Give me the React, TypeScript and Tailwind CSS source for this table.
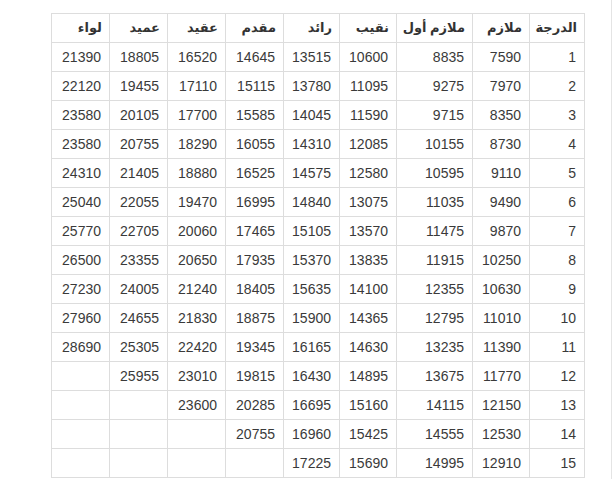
import React from "react";

const headers = [
  "الدرجة",
  "ملازم",
  "ملازم أول",
  "نقيب",
  "رائد",
  "مقدم",
  "عقيد",
  "عميد",
  "لواء",
];

// widths right to left, matching the header order
const colWidths = [
  "w-[55px]",
  "w-[57px]",
  "w-[76px]",
  "w-[57px]",
  "w-[56px]",
  "w-[58px]",
  "w-[58px]",
  "w-[58px]",
  "w-[58px]",
];

const rows: (number | null)[][] = [
  [1, 7590, 8835, 10600, 13515, 14645, 16520, 18805, 21390],
  [2, 7970, 9275, 11095, 13780, 15115, 17110, 19455, 22120],
  [3, 8350, 9715, 11590, 14045, 15585, 17700, 20105, 23580],
  [4, 8730, 10155, 12085, 14310, 16055, 18290, 20755, 23580],
  [5, 9110, 10595, 12580, 14575, 16525, 18880, 21405, 24310],
  [6, 9490, 11035, 13075, 14840, 16995, 19470, 22055, 25040],
  [7, 9870, 11475, 13570, 15105, 17465, 20060, 22705, 25770],
  [8, 10250, 11915, 13835, 15370, 17935, 20650, 23355, 26500],
  [9, 10630, 12355, 14100, 15635, 18405, 21240, 24005, 27230],
  [10, 11010, 12795, 14365, 15900, 18875, 21830, 24655, 27960],
  [11, 11390, 13235, 14630, 16165, 19345, 22420, 25305, 28690],
  [12, 11770, 13675, 14895, 16430, 19815, 23010, 25955, null],
  [13, 12150, 14115, 15160, 16695, 20285, 23600, null, null],
  [14, 12530, 14555, 15425, 16960, 20755, null, null, null],
  [15, 12910, 14995, 15690, 17225, null, null, null, null],
];

export default function App() {
  return (
    <div className="h-[479px] w-[615px] bg-white font-['Liberation_Sans','DejaVu_Sans',sans-serif]">
      <div className="h-full w-[612px] border-r border-[#e4e4e4] pl-[51px] pt-[13px]">
        <table
          dir="rtl"
          className="w-[534px] table-fixed border-collapse text-[14px] leading-[20px] text-[#3a3a3a]"
        >
          <colgroup>
            {colWidths.map((w, i) => <col key={i} className={w} />)}
          </colgroup>
          <thead>
            <tr>
              {headers.map((h) => (
                <th
                  key={h}
                  className="h-[29px] whitespace-nowrap border border-[#ddd] px-[7px] py-[4px] text-right text-[13px] font-bold text-[#333]"
                >
                  {h}
                </th>
              ))}
            </tr>
          </thead>
          <tbody>
            {rows.map((r) => (
              <tr key={r[0]}>
                {r.map((v, i) => (
                  <td
                    key={i}
                    className="h-[29px] border border-[#ddd] px-[8px] py-[4px] text-right"
                  >
                    {v ?? ""}
                  </td>
                ))}
              </tr>
            ))}
          </tbody>
        </table>
      </div>
    </div>
  );
}
